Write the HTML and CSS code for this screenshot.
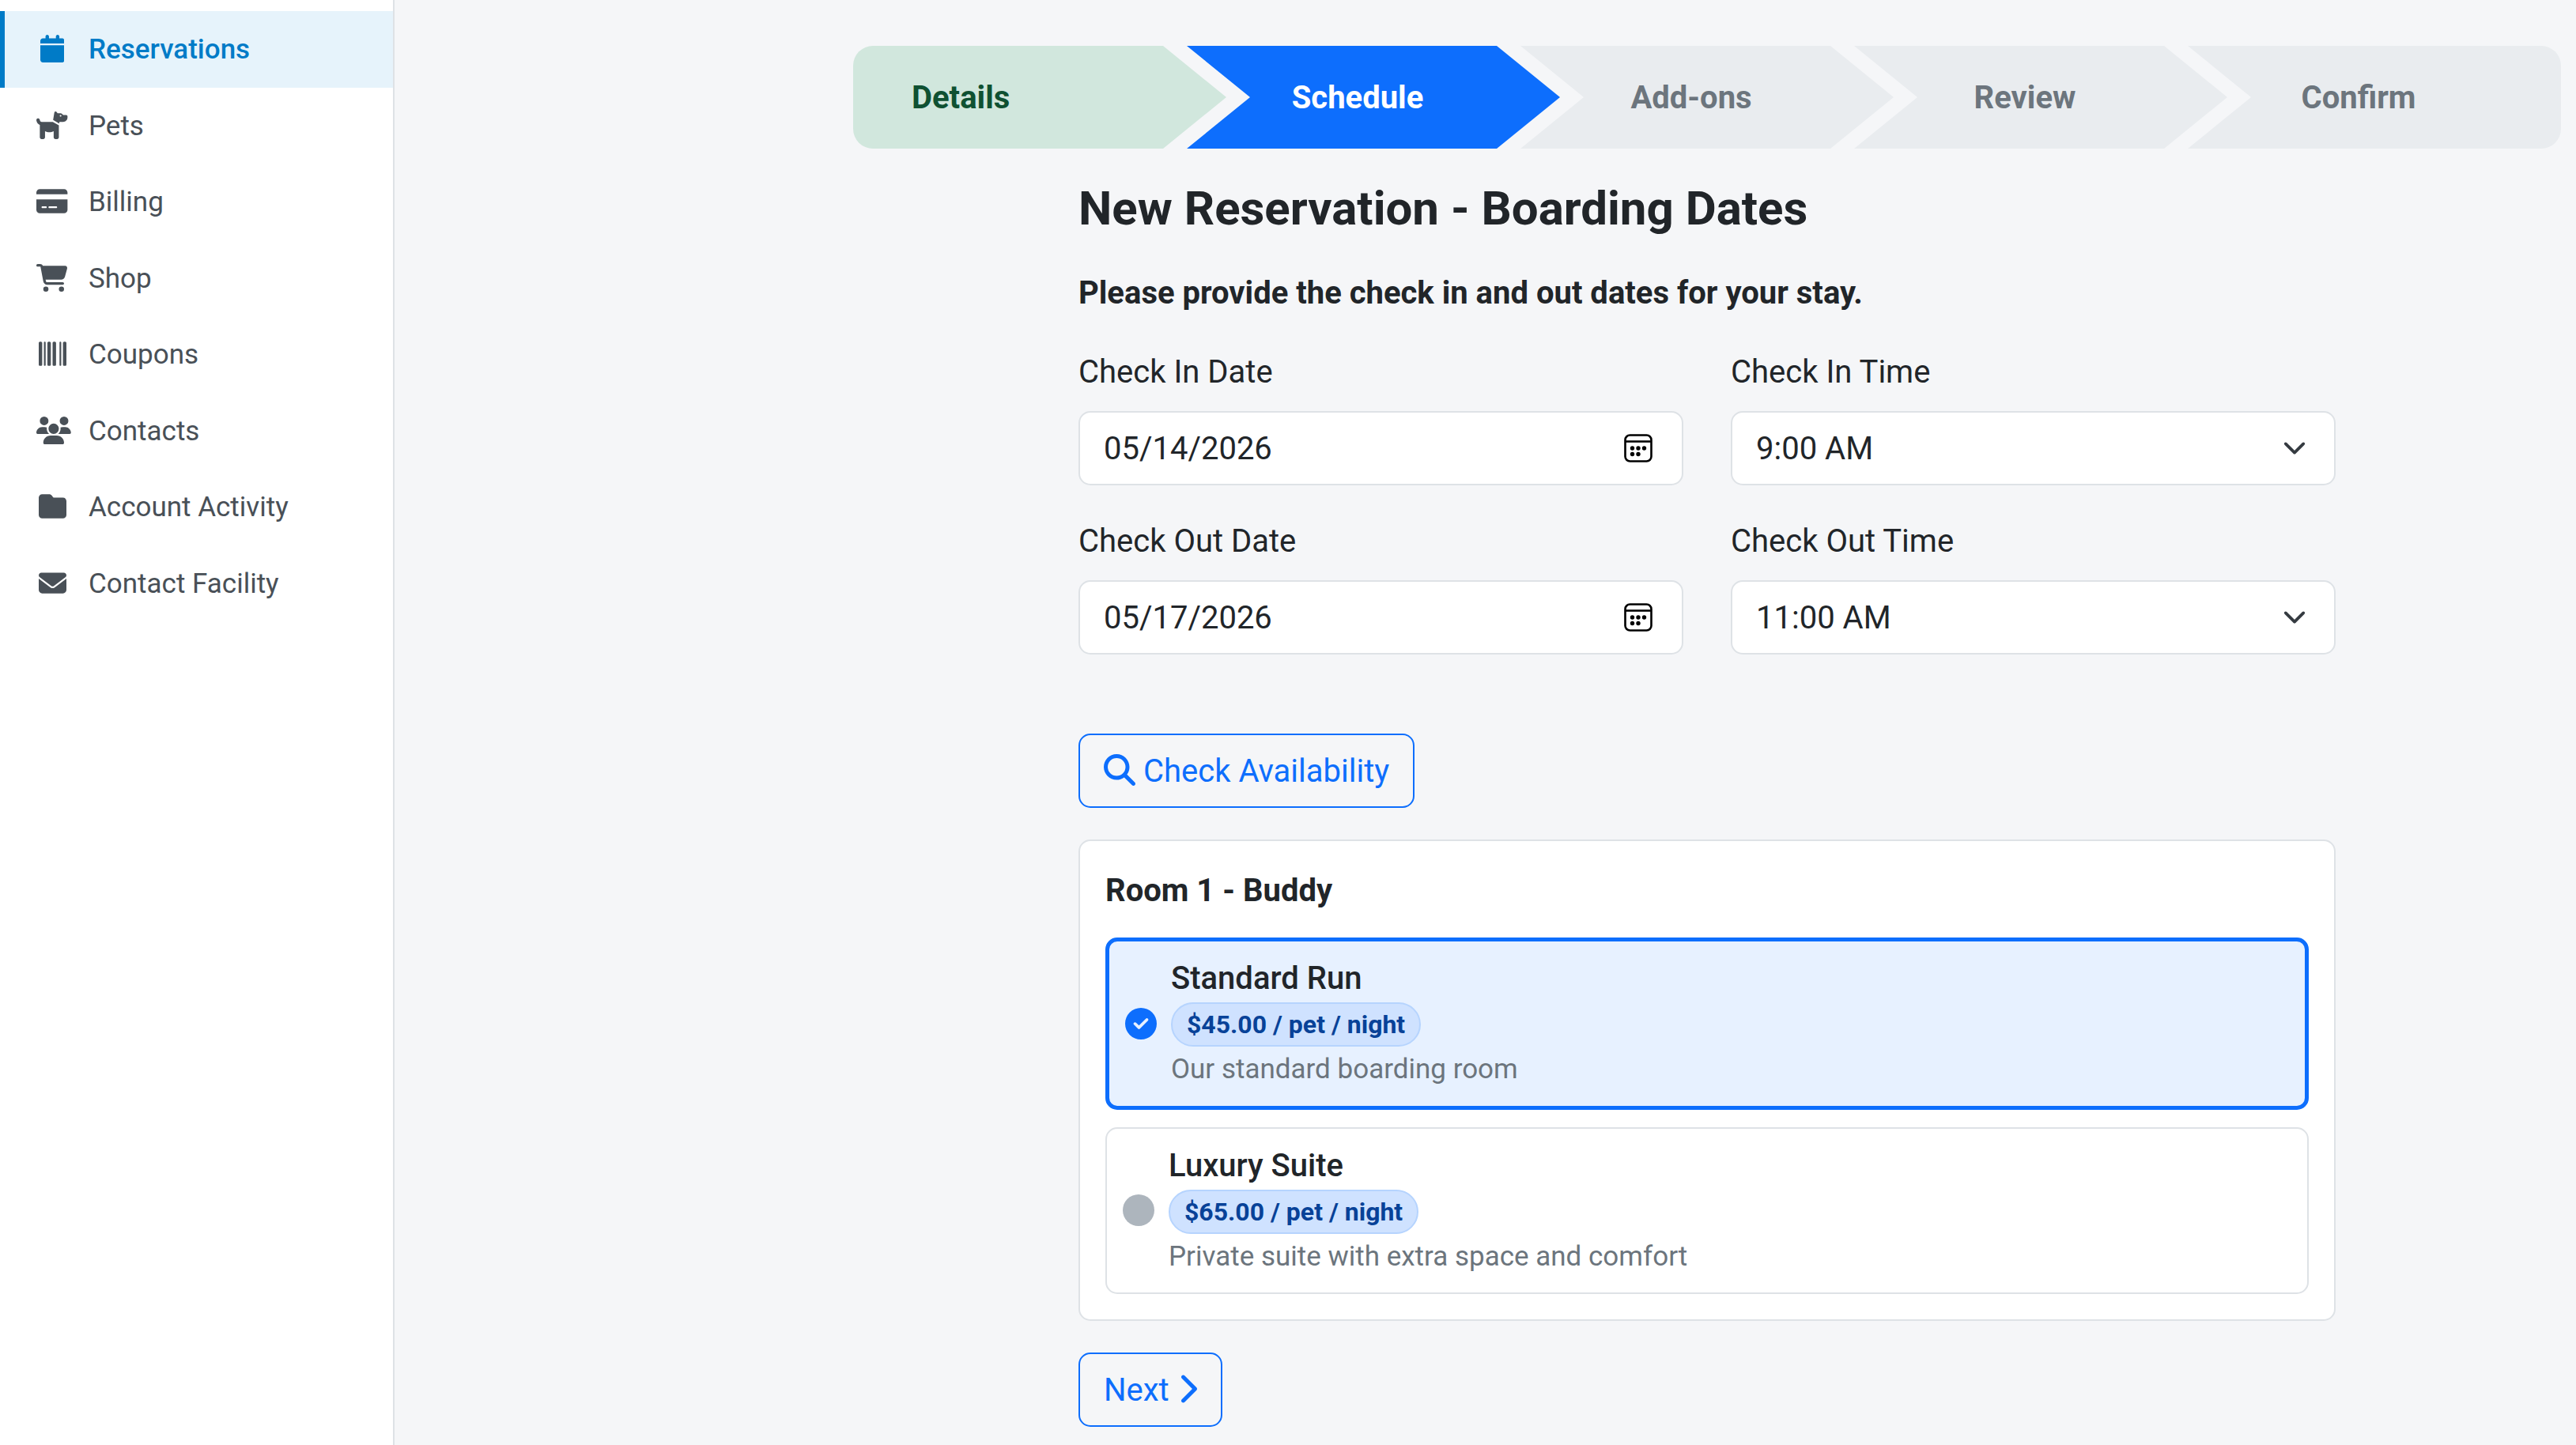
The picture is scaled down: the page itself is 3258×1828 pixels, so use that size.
FILE: index.html
```html
<!DOCTYPE html>
<html lang="en">
<head>
    <meta charset="UTF-8">
    <meta name="viewport" content="width=device-width, initial-scale=1.0">
    <title>New Reservation</title>
    <link rel="stylesheet" href="styles.css">
</head>
<body>
    <nav class="sidebar">
        <a class="nav-item active">
            <span class="nav-icon"><svg viewBox="0 0 448 512"><path d="M96 32V64H48C21.5 64 0 85.5 0 112v48H448V112c0-26.5-21.5-48-48-48H352V32c0-17.7-14.3-32-32-32s-32 14.3-32 32V64H160V32c0-17.7-14.3-32-32-32S96 14.3 96 32zM448 192H0V464c0 26.5 21.5 48 48 48H400c26.5 0 48-21.5 48-48V192z"/></svg></span>
            <span class="nav-label">Reservations</span>
        </a>
        <a class="nav-item">
            <span class="nav-icon"><svg viewBox="0 0 576 512"><path d="M309.6 158.5L332.7 19.8C334.6 8.4 344.5 0 356.1 0c7.5 0 14.5 3.5 19 9.5L392 32h52.1c12.7 0 24.9 5.1 33.9 14.1L496 64h56c13.3 0 24 10.7 24 24v24c0 44.2-35.8 80-80 80H464 448 426.7l-5.1 30.5-112-64zM416 256.1L416 480c0 17.7-14.3 32-32 32H352c-17.7 0-32-14.3-32-32V364.8c-24 12.3-51.2 19.2-80 19.2s-56-6.9-80-19.2V480c0 17.7-14.3 32-32 32H96c-17.7 0-32-14.3-32-32V249.8c-28.8-10.9-51.4-35.3-59.2-66.5L1 167.8c-4.3-17.1 6.1-34.5 23.3-38.8s34.5 6.1 38.8 23.3l3.9 15.5C70.5 182 83.3 192 98 192h30 16H303.8L416 256.1zM464 80a16 16 0 1 0 -32 0 16 16 0 1 0 32 0z"/></svg></span>
            <span class="nav-label">Pets</span>
        </a>
        <a class="nav-item">
            <span class="nav-icon"><svg viewBox="0 0 576 512"><path d="M64 32C28.7 32 0 60.7 0 96v32H576V96c0-35.3-28.7-64-64-64H64zM576 224H0V416c0 35.3 28.7 64 64 64H512c35.3 0 64-28.7 64-64V224zM112 352h64c8.8 0 16 7.2 16 16s-7.2 16-16 16H112c-8.8 0-16-7.2-16-16s7.2-16 16-16zm112 16c0-8.8 7.2-16 16-16H368c8.8 0 16 7.2 16 16s-7.2 16-16 16H240c-8.8 0-16-7.2-16-16z"/></svg></span>
            <span class="nav-label">Billing</span>
        </a>
        <a class="nav-item">
            <span class="nav-icon"><svg viewBox="0 0 576 512"><path d="M0 24C0 10.7 10.7 0 24 0H69.5c22 0 41.5 12.8 50.6 32h411c26.3 0 45.5 25 38.6 50.4l-41 152.3c-8.5 31.4-37 53.3-69.5 53.3H170.7l5.4 28.5c2.2 11.3 12.1 19.5 23.6 19.5H488c13.3 0 24 10.7 24 24s-10.7 24-24 24H199.7c-34.6 0-64.3-24.6-70.7-58.5L77.4 54.5c-.7-3.8-4-6.5-7.9-6.5H24C10.7 48 0 37.3 0 24zM128 464a48 48 0 1 1 96 0 48 48 0 1 1 -96 0zm336-48a48 48 0 1 1 0 96 48 48 0 1 1 0-96z"/></svg></span>
            <span class="nav-label">Shop</span>
        </a>
        <a class="nav-item">
            <span class="nav-icon"><svg viewBox="0 0 512 512"><path d="M24 32C10.7 32 0 42.7 0 56V456c0 13.3 10.7 24 24 24H40c13.3 0 24-10.7 24-24V56c0-13.3-10.7-24-24-24H24zm88 0c-8.8 0-16 7.2-16 16V464c0 8.8 7.2 16 16 16s16-7.2 16-16V48c0-8.8-7.2-16-16-16zm72 0c-13.3 0-24 10.7-24 24V456c0 13.3 10.7 24 24 24h16c13.3 0 24-10.7 24-24V56c0-13.3-10.7-24-24-24H184zm96 0c-13.3 0-24 10.7-24 24V456c0 13.3 10.7 24 24 24h16c13.3 0 24-10.7 24-24V56c0-13.3-10.7-24-24-24H280zM448 56V456c0 13.3 10.7 24 24 24h16c13.3 0 24-10.7 24-24V56c0-13.3-10.7-24-24-24H472c-13.3 0-24 10.7-24 24zm-64-8V464c0 8.8 7.2 16 16 16s16-7.2 16-16V48c0-8.8-7.2-16-16-16s-16 7.2-16 16z"/></svg></span>
            <span class="nav-label">Coupons</span>
        </a>
        <a class="nav-item">
            <span class="nav-icon"><svg viewBox="0 0 640 512"><path d="M144 0a80 80 0 1 1 0 160A80 80 0 1 1 144 0zM512 0a80 80 0 1 1 0 160A80 80 0 1 1 512 0zM0 298.7C0 239.8 47.8 192 106.7 192h42.7c15.9 0 31 3.5 44.6 9.7c-1.3 7.2-1.9 14.7-1.9 22.3c0 38.2 16.8 72.5 43.3 96c-.2 0-.4 0-.7 0H21.3C9.6 320 0 310.4 0 298.7zM405.3 320c-.2 0-.4 0-.7 0c26.6-23.5 43.3-57.8 43.3-96c0-7.6-.7-15-1.9-22.3c13.6-6.3 28.7-9.7 44.6-9.7h42.7C592.2 192 640 239.8 640 298.7c0 11.8-9.6 21.3-21.3 21.3H405.3zM224 224a96 96 0 1 1 192 0 96 96 0 1 1 -192 0zM128 485.3C128 411.7 187.7 352 261.3 352H378.7C452.3 352 512 411.7 512 485.3c0 14.7-11.9 26.7-26.7 26.7H154.7c-14.7 0-26.7-11.9-26.7-26.7z"/></svg></span>
            <span class="nav-label">Contacts</span>
        </a>
        <a class="nav-item">
            <span class="nav-icon"><svg viewBox="0 0 512 512"><path d="M64 480H448c35.3 0 64-28.7 64-64V160c0-35.3-28.7-64-64-64H288c-10.1 0-19.6-4.7-25.6-12.8L243.2 57.6C231.1 41.5 212.1 32 192 32H64C28.7 32 0 60.7 0 96V416c0 35.3 28.7 64 64 64z"/></svg></span>
            <span class="nav-label">Account Activity</span>
        </a>
        <a class="nav-item">
            <span class="nav-icon"><svg viewBox="0 0 512 512"><path d="M48 64C21.5 64 0 85.5 0 112c0 15.1 7.1 29.3 19.2 38.4L236.8 313.6c11.4 8.5 27 8.5 38.4 0L492.8 150.4c12.1-9.1 19.2-23.3 19.2-38.4c0-26.5-21.5-48-48-48H48zM0 176V384c0 35.3 28.7 64 64 64H448c35.3 0 64-28.7 64-64V176L294.4 339.2c-22.8 17.1-54 17.1-76.8 0L0 176z"/></svg></span>
            <span class="nav-label">Contact Facility</span>
        </a>
    </nav>

    <main class="main">
        <div class="steps">
            <div class="step done">Details</div>
            <div class="step current">Schedule</div>
            <div class="step">Add-ons</div>
            <div class="step">Review</div>
            <div class="step last">Confirm</div>
        </div>

        <div class="content">
            <h1>New Reservation - Boarding Dates</h1>
            <p class="intro">Please provide the check in and out dates for your stay.</p>

            <div class="form-grid">
                <div class="field">
                    <label>Check In Date</label>
                    <div class="control">
                        <span>05/14/2026</span>
                        <svg class="date-icon" viewBox="0 0 36 36"><rect x="1.5" y="1.5" width="33" height="33" rx="6"/><path d="M2 9.5H34"/><circle cx="10.5" cy="18" r="2.7"/><circle cx="18" cy="18" r="2.7"/><circle cx="25.5" cy="18" r="2.7"/><circle cx="10.5" cy="25.5" r="2.7"/><circle cx="18" cy="25.5" r="2.7"/></svg>
                    </div>
                </div>
                <div class="field">
                    <label>Check In Time</label>
                    <div class="control">
                        <span>9:00 AM</span>
                        <svg class="select-icon" viewBox="0 0 16 16"><path d="m2 5 6 6 6-6"/></svg>
                    </div>
                </div>
                <div class="field">
                    <label>Check Out Date</label>
                    <div class="control">
                        <span>05/17/2026</span>
                        <svg class="date-icon" viewBox="0 0 36 36"><rect x="1.5" y="1.5" width="33" height="33" rx="6"/><path d="M2 9.5H34"/><circle cx="10.5" cy="18" r="2.7"/><circle cx="18" cy="18" r="2.7"/><circle cx="25.5" cy="18" r="2.7"/><circle cx="10.5" cy="25.5" r="2.7"/><circle cx="18" cy="25.5" r="2.7"/></svg>
                    </div>
                </div>
                <div class="field">
                    <label>Check Out Time</label>
                    <div class="control">
                        <span>11:00 AM</span>
                        <svg class="select-icon" viewBox="0 0 16 16"><path d="m2 5 6 6 6-6"/></svg>
                    </div>
                </div>
            </div>

            <button class="btn" type="button">
                <svg class="btn-icon" viewBox="0 0 512 512"><path d="M416 208c0 45.9-14.9 88.3-40 122.7L502.6 457.4c12.5 12.5 12.5 32.8 0 45.3s-32.8 12.5-45.3 0L330.7 376c-34.4 25.2-76.8 40-122.7 40C93.1 416 0 322.9 0 208S93.1 0 208 0S416 93.1 416 208zM208 352a144 144 0 1 0 0-288 144 144 0 1 0 0 288z"/></svg>
                <span>Check Availability</span>
            </button>

            <div class="card">
                <h2>Room 1 - Buddy</h2>
                <div class="option selected">
                    <svg class="option-icon" viewBox="0 0 512 512"><path d="M256 512A256 256 0 1 0 256 0a256 256 0 1 0 0 512zM369 209L241 337c-9.4 9.4-24.6 9.4-33.9 0l-64-64c-9.4-9.4-9.4-24.6 0-33.9s24.6-9.4 33.9 0l47 47L335 175c9.4-9.4 24.6-9.4 33.9 0s9.4 24.6 0 33.9z"/></svg>
                    <div class="option-body">
                        <div class="option-name">Standard Run</div>
                        <span class="price">$45.00 / pet / night</span>
                        <div class="option-desc">Our standard boarding room</div>
                    </div>
                </div>
                <div class="option">
                    <svg class="option-icon" viewBox="0 0 512 512"><circle cx="256" cy="256" r="256"/></svg>
                    <div class="option-body">
                        <div class="option-name">Luxury Suite</div>
                        <span class="price">$65.00 / pet / night</span>
                        <div class="option-desc">Private suite with extra space and comfort</div>
                    </div>
                </div>
            </div>

            <button class="btn" type="button">
                <span>Next</span>
                <svg class="btn-icon narrow" viewBox="0 0 320 512"><path d="M310.6 233.4c12.5 12.5 12.5 32.8 0 45.3l-192 192c-12.5 12.5-32.8 12.5-45.3 0s-12.5-32.8 0-45.3L242.7 256 73.4 86.6c-12.5-12.5-12.5-32.8 0-45.3s32.8-12.5 45.3 0l192 192z"/></svg>
            </button>
        </div>
    </main>
</body>
</html>
```

FILE: styles.css
```css
* {
    box-sizing: border-box;
}
body {
    margin: 0;
    display: flex;
    min-height: 100vh;
    font-family: Roboto, "Liberation Sans", sans-serif;
    font-size: 40px;
    line-height: 62px;
    color: #212529;
    background-color: #f5f6f8;
}
svg {
    display: block;
    flex: none;
    fill: currentColor;
}

/* Sidebar */
.sidebar {
    flex: none;
    width: 499px;
    padding-top: 14px;
    background-color: #fff;
    border-right: 2px solid #dee2e6;
}
.nav-item {
    display: flex;
    align-items: center;
    gap: 26px;
    height: 96.5px;
    padding-left: 40px;
    border-left: 6px solid transparent;
    font-size: 35px;
    color: #495057;
}
.nav-item.active {
    color: #007bc7;
    background-color: #e6f3fb;
    border-left-color: #007bc7;
    font-weight: 500;
}
.nav-icon {
    display: flex;
    justify-content: safe center;
    width: 40px;
    padding-bottom: 1px;
}
.nav-icon svg {
    height: 35px;
}
.nav-label {
    padding-top: 2px;
}

/* Steps */
.main {
    flex: 1;
    padding: 58px 19px 0 580px;
}
.steps {
    display: flex;
}
.step {
    flex: none;
    width: 472px;
    height: 130px;
    margin-left: -50px;
    padding: 2px 40px 0 0;
    display: flex;
    align-items: center;
    justify-content: center;
    font-weight: 700;
    color: #6c757d;
    background-color: #e9ecef;
    clip-path: polygon(0 0, calc(100% - 80px) 0, 100% 50%, calc(100% - 80px) 100%, 0 100%, 80px 50%);
}
.step.done {
    justify-content: flex-start;
    margin-left: 0;
    padding-left: 74px;
    color: #0f5132;
    background-color: #d1e7dd;
    border-radius: 25px 0 0 25px;
    clip-path: polygon(0 0, calc(100% - 80px) 0, 100% 50%, calc(100% - 80px) 100%, 0 100%);
}
.step.current {
    color: #fff;
    background-color: #0d6efd;
}
.step.last {
    border-radius: 0 25px 25px 0;
    clip-path: polygon(0 0, 100% 0, 100% 100%, 0 100%, 80px 50%);
}

/* Form */
.content {
    width: 1590px;
    margin: 0 auto;
}
h1 {
    margin: 40px 0;
    font-size: 60px;
    line-height: 72px;
    font-weight: 700;
}
.intro {
    margin: 0 0 38px;
    font-weight: 700;
}
.form-grid {
    display: grid;
    grid-template-columns: 1fr 1fr;
    gap: 40px 60px;
    margin-bottom: 100px;
}
.field label {
    display: block;
    margin-bottom: 18px;
}
.control {
    display: flex;
    align-items: center;
    justify-content: space-between;
    height: 94px;
    padding: 0 30px;
    background-color: #fff;
    border: 2px solid #dee2e6;
    border-radius: 15px;
}
.control span, .btn span {
    padding-top: 2px;
}
.date-icon {
    width: 36px;
    height: 36px;
    margin-right: 7px;
    color: #000;
}
.date-icon rect, .date-icon path {
    fill: none;
    stroke: #000;
    stroke-width: 2.6;
}
.select-icon {
    width: 30px;
    height: 30px;
    margin-right: 5px;
}
.select-icon path {
    fill: none;
    stroke: #343a40;
    stroke-width: 2;
    stroke-linecap: round;
    stroke-linejoin: round;
}
.btn {
    display: flex;
    align-items: center;
    gap: 10px;
    height: 94px;
    padding: 0 30px;
    font: inherit;
    color: #0d6efd;
    background: none;
    border: 2px solid #0d6efd;
    border-radius: 15px;
}
.btn-icon {
    width: 40px;
    height: 40px;
    margin-bottom: 2px;
}
.btn-icon.narrow {
    width: 25px;
}

/* Rooms */
.card {
    margin: 40px 0;
    padding: 32px;
    background-color: #fff;
    border: 2px solid #dee2e6;
    border-radius: 15px;
}
h2 {
    margin: 0 0 28px;
    font-size: 40px;
    line-height: 62px;
    font-weight: 700;
}
.option {
    display: flex;
    align-items: center;
    gap: 18px;
    height: 211px;
    padding: 16px 20px;
    border: 2px solid #dee2e6;
    border-radius: 15px;
}
.option.selected {
    height: 218px;
    margin-bottom: 22px;
    background-color: #e7f1ff;
    border: 5px solid #0d6efd;
}
.option-icon {
    width: 40px;
    height: 40px;
    margin-bottom: 1px;
    color: #adb5bd;
}
.selected .option-icon {
    margin-bottom: 0;
    color: #0d6efd;
}
.option-body {
    align-self: flex-start;
}
.option-name {
    font-weight: 500;
}
.price {
    display: block;
    width: fit-content;
    height: 56px;
    margin: -1px 0 3px;
    padding: 0 18px;
    font-size: 32px;
    line-height: 52px;
    font-weight: 700;
    color: #084298;
    background-color: #cfe2ff;
    border: 2px solid #b6d4fe;
    border-radius: 28px;
}
.option-desc {
    font-size: 35px;
    line-height: 52.5px;
    color: #6c757d;
}
```
